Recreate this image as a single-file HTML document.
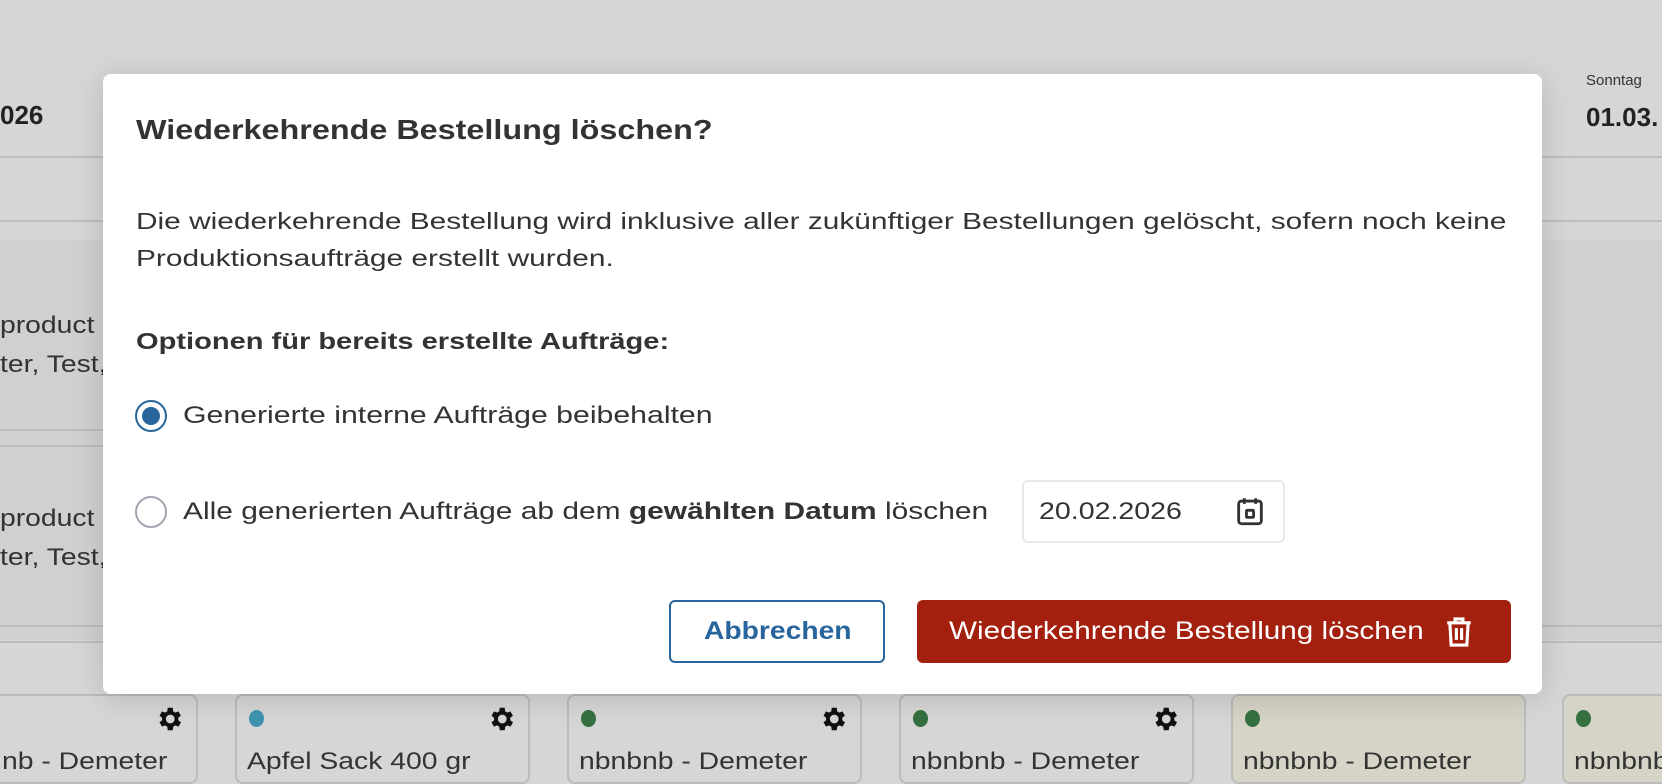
<!DOCTYPE html>
<html><head><meta charset="utf-8"><style>
*{box-sizing:border-box;margin:0;padding:0}
body{width:1662px;height:766px;overflow:hidden;background:#d6d6d6;font-family:"Liberation Sans",sans-serif;color:#333;position:relative}
.a{position:absolute}
.hl{position:absolute;height:2px;background:#bdbdbd}
.card{position:absolute;top:694px;height:90px;border:2px solid #bcbcbc;border-radius:8px;background:#d6d6d6}
.dot{position:absolute;top:14px;left:12px;width:15px;height:17px;border-radius:50%}
.gear{position:absolute;top:8px;right:12px}
.ct{position:absolute;top:52px;left:10px;font-size:24px;color:#333;white-space:nowrap;transform:scaleX(1.18);transform-origin:0 0}
.modal{position:absolute;left:103px;top:74px;width:1439px;height:620px;background:#fff;border-radius:8px;box-shadow:0 4px 30px rgba(0,0,0,.15)}
.t{position:absolute;white-space:nowrap;transform-origin:0 0}
</style></head><body>
<div class="a" style="left:0;top:100px;font-size:26px;font-weight:bold;color:#222">026</div>
<div class="a" style="left:1586px;top:72px;font-size:15px;color:#333">Sonntag</div>
<div class="a" style="left:1586px;top:102px;font-size:26px;font-weight:bold;color:#222">01.03.</div>
<div class="hl" style="left:0;top:156px;width:1662px"></div>
<div class="hl" style="left:0;top:220px;width:1662px"></div>
<div class="a" style="left:0;top:240px;width:1662px;height:400px;background:#d0d0d0"></div>
<div class="a" style="left:0;top:312px;font-size:24px;transform:scaleX(1.18);transform-origin:0 0">product<br><span style="line-height:50px">ter, Test,</span></div>
<div class="a" style="left:0;top:505px;font-size:24px;transform:scaleX(1.18);transform-origin:0 0">product<br><span style="line-height:50px">ter, Test,</span></div>
<div class="hl" style="left:0;top:429px;width:110px"></div>
<div class="hl" style="left:0;top:445px;width:110px"></div>
<div class="hl" style="left:0;top:625px;width:1662px"></div>
<div class="hl" style="left:0;top:641px;width:1662px"></div>

<div class="card" style="left:-10px;width:208px"><svg class="gear" width="30" height="30" viewBox="0 0 24 24"><path fill="#111" d="M19.4 13a7.5 7.5 0 0 0 0-2l2.1-1.6-2-3.5-2.5 1a7 7 0 0 0-1.700-1L15 3h-4l-.4 2.9a7 7 0 0 0-1.700 1l-2.500-1-2 3.5L6.500 11a7.500 7.500 0 0 0 0 2l-2.100 1.600 2 3.500 2.500-1a7 7 0 0 0 1.700 1L11 21h4l.4-2.900a7 7 0 0 0 1.700-1l2.500 1 2-3.500zM13 15.500a3.500 3.500 0 1 1 0-7 3.500 3.500 0 0 1 0 7z"/></svg><div class="ct">nb - Demeter</div></div>
<div class="card" style="left:235px;width:295px"><div class="dot" style="background:#3f93b0"></div><svg class="gear" width="30" height="30" viewBox="0 0 24 24"><path fill="#111" d="M19.4 13a7.5 7.5 0 0 0 0-2l2.1-1.6-2-3.5-2.5 1a7 7 0 0 0-1.7-1L15 3h-4l-.4 2.9a7 7 0 0 0-1.7 1l-2.5-1-2 3.5L6.5 11a7.5 7.5 0 0 0 0 2l-2.1 1.6 2 3.5 2.5-1a7 7 0 0 0 1.7 1L11 21h4l.4-2.9a7 7 0 0 0 1.7-1l2.5 1 2-3.5zM13 15.5a3.5 3.5 0 1 1 0-7 3.5 3.5 0 0 1 0 7z"/></svg><div class="ct">Apfel Sack 400 gr</div></div>
<div class="card" style="left:567px;width:295px"><div class="dot" style="background:#357040"></div><svg class="gear" width="30" height="30" viewBox="0 0 24 24"><path fill="#111" d="M19.4 13a7.5 7.5 0 0 0 0-2l2.1-1.6-2-3.5-2.5 1a7 7 0 0 0-1.7-1L15 3h-4l-.4 2.9a7 7 0 0 0-1.7 1l-2.5-1-2 3.5L6.5 11a7.5 7.5 0 0 0 0 2l-2.1 1.6 2 3.5 2.5-1a7 7 0 0 0 1.7 1L11 21h4l.4-2.9a7 7 0 0 0 1.7-1l2.5 1 2-3.5zM13 15.5a3.5 3.5 0 1 1 0-7 3.5 3.5 0 0 1 0 7z"/></svg><div class="ct">nbnbnb - Demeter</div></div>
<div class="card" style="left:899px;width:295px"><div class="dot" style="background:#357040"></div><svg class="gear" width="30" height="30" viewBox="0 0 24 24"><path fill="#111" d="M19.4 13a7.5 7.5 0 0 0 0-2l2.1-1.6-2-3.5-2.5 1a7 7 0 0 0-1.7-1L15 3h-4l-.4 2.9a7 7 0 0 0-1.7 1l-2.5-1-2 3.5L6.5 11a7.5 7.5 0 0 0 0 2l-2.1 1.6 2 3.5 2.5-1a7 7 0 0 0 1.7 1L11 21h4l.4-2.9a7 7 0 0 0 1.7-1l2.5 1 2-3.5zM13 15.5a3.5 3.5 0 1 1 0-7 3.5 3.5 0 0 1 0 7z"/></svg><div class="ct">nbnbnb - Demeter</div></div>
<div class="card" style="left:1231px;width:295px;background:#d6d4c6"><div class="dot" style="background:#357040"></div><div class="ct">nbnbnb - Demeter</div></div>
<div class="card" style="left:1562px;width:295px;background:#d6d4c6"><div class="dot" style="background:#357040"></div><div class="ct">nbnbnb</div></div>

<div class="modal">
<div class="t" style="left:33px;top:40px;font-size:28px;font-weight:bold;color:#333;transform:scaleX(1.155)">Wiederkehrende Bestellung löschen?</div>
<div class="t" style="left:33px;top:129px;font-size:23.5px;line-height:37px;color:#333;transform:scaleX(1.27)">Die wiederkehrende Bestellung wird inklusive aller zukünftiger Bestellungen gelöscht, sofern noch keine<br>Produktionsaufträge erstellt wurden.</div>
<div class="t" style="left:33px;top:254px;font-size:23.5px;font-weight:bold;color:#333;transform:scaleX(1.236)">Optionen für bereits erstellte Aufträge:</div>
<div class="a" style="left:32px;top:326px;width:32px;height:32px;border:2px solid #27659c;border-radius:50%;"><div style="position:absolute;left:5px;top:5px;width:18px;height:18px;border-radius:50%;background:#27659c"></div></div>
<div class="t" style="left:80px;top:328px;font-size:24px;color:#333;transform:scaleX(1.26)">Generierte interne Aufträge beibehalten</div>
<div class="a" style="left:32px;top:422px;width:32px;height:32px;border:2px solid #a8a3b0;border-radius:50%"></div>
<div class="t" style="left:80px;top:424px;font-size:24px;color:#333;transform:scaleX(1.247)">Alle generierten Aufträge ab dem <b>gewählten Datum</b> löschen</div>
<div class="a" style="left:919px;top:406px;width:263px;height:63px;border:2px solid #e8e8e8;border-radius:6px"></div>
<div class="t" style="left:936px;top:424px;font-size:24px;color:#333;transform:scaleX(1.19)">20.02.2026</div>
<svg class="a" style="left:1130px;top:420px" width="34" height="34" viewBox="0 0 24 24" fill="none" stroke="#333" stroke-width="2"><rect x="4" y="5" width="16" height="16" rx="2"/><path d="M8 3v4M16 3v4"/><rect x="9.5" y="11.5" width="5" height="5" rx=".5"/></svg>
<div class="a" style="left:566px;top:526px;width:216px;height:63px;border:2px solid #27659c;border-radius:6px;color:#27659c;font-size:25px;font-weight:bold;line-height:59px"><span style="position:absolute;left:33px;white-space:nowrap;transform:scaleX(1.13);transform-origin:0 0">Abbrechen</span></div>
<div class="a" style="left:814px;top:526px;width:594px;height:63px;background:#a31f0e;border-radius:6px;color:#fff;font-size:25px;line-height:63px;white-space:nowrap"><span style="position:absolute;left:32px;transform:scaleX(1.186);transform-origin:0 0">Wiederkehrende Bestellung löschen</span>
<svg style="position:absolute;right:36px;top:15px" width="32" height="34" viewBox="0 0 24 26" fill="none" stroke="#fff" stroke-width="2.4"><path d="M3 6h18M9 6V3h6v3"/><path d="M5 6l1 17h12l1-17"/><path d="M10 10v9M14 10v9"/></svg></div>
</div>
</body></html>
